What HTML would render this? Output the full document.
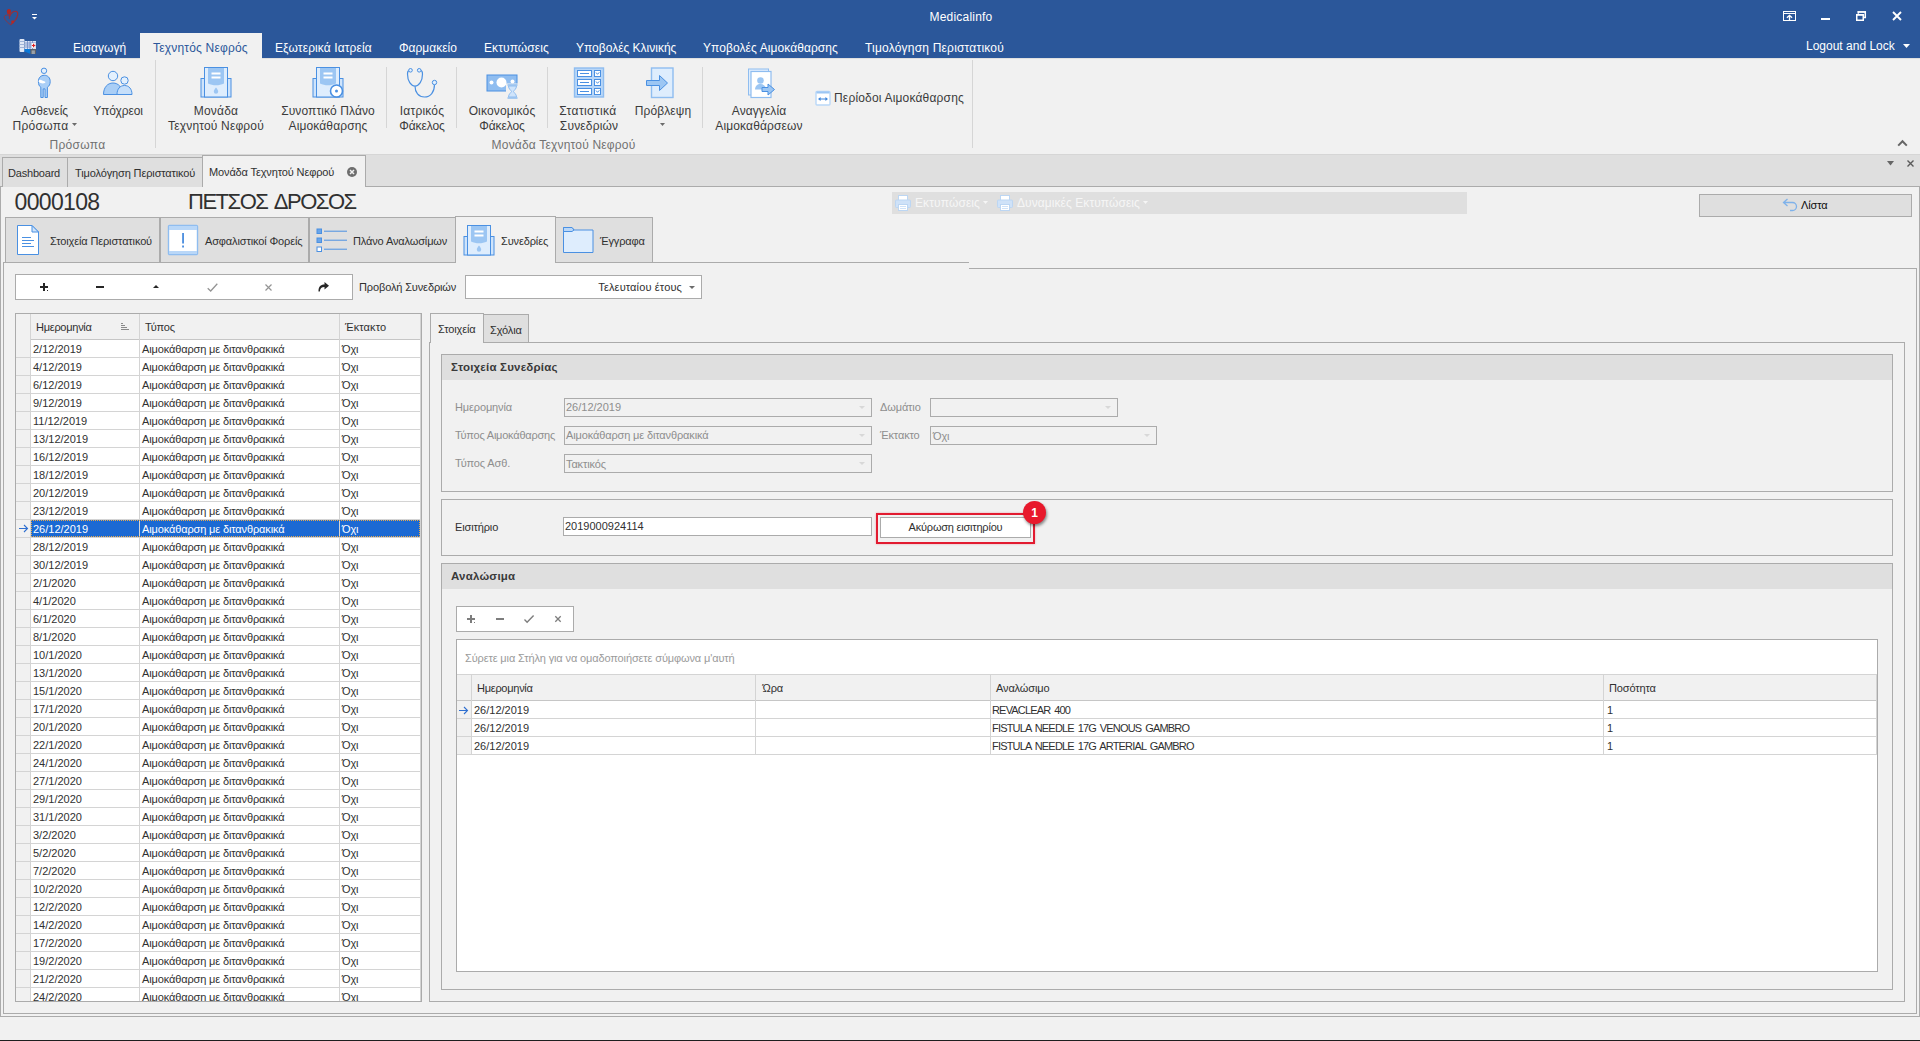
<!DOCTYPE html>
<html lang="el">
<head>
<meta charset="utf-8">
<title>Medicalinfo</title>
<style>
*{box-sizing:border-box;margin:0;padding:0}
html,body{width:1920px;height:1041px;overflow:hidden;background:#f1f1f1}
body{position:relative;font-family:"Liberation Sans",sans-serif;font-size:11px;color:#303030;line-height:1}
.a{position:absolute}
.t{position:absolute;white-space:nowrap;line-height:14px;height:14px;letter-spacing:-.130px}
.n{letter-spacing:0}
.c{text-align:center}
.r13{font-size:12px;line-height:16px;height:16px;letter-spacing:0}
.w{color:#fff}
.bx{position:absolute;border:1px solid #ababab}
.g{background:#dfdfdf}
.wh{background:#fff}
.dis{color:#8e8e8e}
.sep{position:absolute;width:1px;background:#d6d6d6}
svg{position:absolute;overflow:visible}
.rt{position:absolute;white-space:nowrap;font-size:12px;line-height:15px;text-align:center;color:#3b3b3b}
</style>
</head>
<body>
<!-- title bar + ribbon tab header -->
<div class="a" style="left:0;top:0;width:1920px;height:58px;background:#2b579a"></div>
<!-- app logo (heart) -->
<svg style="left:3px;top:8px;opacity:.9" width="16" height="18" viewBox="0 0 16 18">
<ellipse cx="5.900" cy="3.600" rx="2.100" ry="2.700" fill="#bf2318"/>
<path d="M6.300 6v5" stroke="#bf2318" stroke-width="1" stroke-opacity=".8" fill="none"/>
<path d="M6.800 8.200c1.200-3 3.400-4.900 5.600-4.900 2 0 2.600 1.600 2.200 3.800-.6 3.400-3.200 6.600-7 9.600" fill="none" stroke="#bf2318" stroke-width="1.100" stroke-opacity=".85"/>
<path d="M5.800 7.400c-1.600-.6-3.600-.4-4.300 1-.8 1.800 1.800 5.400 6 8.300" fill="none" stroke="#bf2318" stroke-width="1" stroke-opacity=".7"/>
<circle cx="9.600" cy="13.700" r="1.500" fill="#c4241a"/>
</svg>
<!-- quick access dropdown -->
<svg style="left:31px;top:13px" width="8" height="8" viewBox="0 0 8 8"><rect x="1" y="1" width="5" height="1" fill="#fff"/><path d="M1 4h5L3.5 6.5z" fill="#fff"/></svg>
<div class="t r13 w c" style="left:861px;width:200px;top:9px;letter-spacing:0.21px">Medicalinfo</div>
<!-- window buttons -->
<svg style="left:1783px;top:11px" width="13" height="10" viewBox="0 0 13 10"><rect x=".500" y=".500" width="12" height="9" fill="none" stroke="#fff"/><path d="M1 2.500h11" stroke="#fff"/><path d="M6.500 9V4.600M3.900 6.800L6.500 4.300l2.600 2.500" fill="none" stroke="#fff" stroke-width="1.300"/></svg>
<div class="a" style="left:1821px;top:18px;width:9px;height:2px;background:#fff"></div>
<svg style="left:1856px;top:11px" width="10" height="10" viewBox="0 0 10 10"><path d="M2.300 2.800V1h7v5.600H7.600" fill="none" stroke="#fff" stroke-width="1.500"/><rect x=".750" y="3.750" width="6.500" height="5.500" fill="none" stroke="#fff" stroke-width="1.500"/><rect x="0" y="3" width="8" height="1.600" fill="#fff"/><rect x="1.500" y=".200" width="8.500" height="1.300" fill="#fff"/></svg>
<svg style="left:1892px;top:11px" width="10" height="10" viewBox="0 0 10 10"><path d="M1 1l8 8M9 1L1 9" stroke="#fff" stroke-width="1.9"/></svg>

<!-- application button icon (hospital) -->
<svg style="left:19px;top:38px" width="18" height="17" viewBox="0 0 18 17">
<rect x="0.5" y="1" width="5" height="13" rx="1" fill="#dfe7f5"/><rect x="0.5" y="3" width="5" height="1" fill="#9fb3d8"/><rect x="0.5" y="6" width="5" height="1" fill="#9fb3d8"/><rect x="0.5" y="9" width="5" height="1" fill="#9fb3d8"/>
<rect x="6" y="3" width="11" height="8" fill="#d9e2f3"/><path d="M6 5h11M6 7h11M6 9h11M8.5 3v8M11 3v8M13.5 3v8" stroke="#6e8cc4" stroke-width=".8"/>
<rect x="12.6" y="5" width="4" height="5" fill="#f4f6fb"/><path d="M14.6 5.8v3.4M12.9 7.5h3.4" stroke="#e02020" stroke-width="1.2"/>
<path d="M5.5 11h6l0 5-6-2.4z" fill="#0a78d8"/><rect x="11.5" y="11" width="5.5" height="5" fill="#5b5f66"/><rect x="12.6" y="12.4" width="3.3" height="3.6" fill="#9aa0a8"/>
</svg>
<div class="t r13 w" style="left:73px;top:40px">Εισαγωγή</div>
<div class="a" style="left:140px;top:33px;width:122px;height:25px;background:#f1f1f1"></div>
<div class="t r13" style="left:153px;top:40px;color:#2b579a;letter-spacing:0.19px">Τεχνητός Νεφρός</div>
<div class="t r13 w" style="left:275px;top:40px;letter-spacing:0.095px">Εξωτερικά Ιατρεία</div>
<div class="t r13 w" style="left:399px;top:40px">Φαρμακείο</div>
<div class="t r13 w" style="left:484px;top:40px;letter-spacing:0.08px">Εκτυπώσεις</div>
<div class="t r13 w" style="left:576px;top:40px">Υποβολές Κλινικής</div>
<div class="t r13 w" style="left:703px;top:40px;letter-spacing:0.08px">Υποβολές Αιμοκάθαρσης</div>
<div class="t r13 w" style="left:865px;top:40px;letter-spacing:0.2px">Τιμολόγηση Περιστατικού</div>
<div class="t r13 w" style="left:1806px;top:38px">Logout and Lock</div>
<svg style="left:1903px;top:44px" width="7" height="4" viewBox="0 0 7 4"><path d="M0 0h7L3.5 4z" fill="#fff"/></svg>
<!-- ribbon body -->
<div class="a" style="left:0;top:58px;width:1920px;height:96px;background:#f1f1f1"></div>
<div class="a" style="left:0;top:58px;width:140px;height:1px;background:#e0e0e0"></div>
<div class="a" style="left:262px;top:58px;width:1658px;height:1px;background:#e0e0e0"></div>
<!-- separators -->
<div class="sep" style="left:155px;top:60px;height:88px"></div>
<div class="sep" style="left:386px;top:67px;height:61px"></div>
<div class="sep" style="left:456px;top:67px;height:61px"></div>
<div class="sep" style="left:547px;top:67px;height:61px"></div>
<div class="sep" style="left:702px;top:67px;height:61px"></div>
<div class="sep" style="left:972px;top:60px;height:88px"></div>

<!-- Ασθενείς Πρόσωπα icon -->
<svg style="left:28px;top:66px" width="32" height="32" viewBox="0 0 32 32">
<circle cx="16" cy="4.800" r="2.700" fill="#e3f0fd" stroke="#4a90e2" stroke-width="1"/>
<path d="M16.300 9.300c3.600 0 5.900 2.500 5.900 6.300 0 2.600-1 4.600-2.800 5.600v10.300h-2.400v-8.600h-1.800v8.600h-2.400v-10.300c-1.700-1-2.400-3-2.400-5.600 0-3.800 2.300-6.300 5.900-6.300z" fill="#a9cef6" stroke="#4a90e2" stroke-width="1"/>
<path d="M11 14.200c.9-.7 2-.4 3.200.2l2.600 1c.8.300.8 1.300 0 1.700-1.100.5-2.800.5-4.200 0-.9-.3-1.700-.8-2-1.500z" fill="#fff"/>
</svg>
<div class="rt" style="left:0;width:89px;top:104px">Ασθενείς</div>
<div class="rt" style="left:-4px;width:89px;top:119px;letter-spacing:0.3px">Πρόσωπα</div>
<svg style="left:72px;top:123px" width="5" height="3" viewBox="0 0 5 3"><path d="M0 0h5L2.500 3z" fill="#6b6b6b"/></svg>

<!-- Υπόχρεοι icon -->
<svg style="left:102px;top:66px" width="32" height="32" viewBox="0 0 32 32">
<circle cx="11" cy="10" r="4.700" fill="#e3f0fd" stroke="#4a90e2" stroke-width="1"/>
<path d="M1.500 28.500c0-7 4-11.500 9.500-11.500s9.500 4.500 9.500 11.500z" fill="#a9cef6" stroke="#4a90e2" stroke-width="1"/>
<circle cx="22.500" cy="14.500" r="3.700" fill="#e3f0fd" stroke="#4a90e2" stroke-width="1"/>
<path d="M15 28.500c0-5.500 3-9 7.500-9s7.500 3.500 7.500 9z" fill="#c6dffa" stroke="#4a90e2" stroke-width="1"/>
</svg>
<div class="rt" style="left:73px;width:90px;top:104px;letter-spacing:-0.1px">Υπόχρεοι</div>

<!-- Μονάδα Τεχνητού Νεφρού icon -->
<svg style="left:200px;top:66px" width="32" height="32" viewBox="0 0 32 32">
<rect x="1" y="12.500" width="30" height="18.500" fill="#cfe4fb" stroke="#4a90e2" stroke-width="1"/>
<rect x="4.500" y="1.500" width="23" height="29.500" fill="#deedfd" stroke="#4a90e2" stroke-width="1"/>
<path d="M8 2h16v15.500c-5 2.400-11 2.400-16 0z" fill="#9cc6f3"/>
<rect x="11.500" y="6.500" width="9" height="2" fill="#fff"/><rect x="11.500" y="10.500" width="9" height="2" fill="#fff"/>
<path d="M16 21.500c1.600 2 2.200 3 2.200 4a2.200 2.200 0 0 1-4.400 0c0-1 .6-2 2.200-4z" fill="#9cc6f3"/>
<path d="M4.500 12.500v18.500M27.500 12.500v18.500" stroke="#4a90e2" stroke-width="1"/>
</svg>
<div class="rt" style="left:156px;width:120px;top:104px;letter-spacing:0.21px">Μονάδα</div>
<div class="rt" style="left:156px;width:120px;top:119px;letter-spacing:0.17px">Τεχνητού Νεφρού</div>

<!-- Συνοπτικό Πλάνο icon -->
<svg style="left:312px;top:66px" width="32" height="32" viewBox="0 0 32 32">
<rect x="1" y="12.500" width="30" height="18.500" fill="#cfe4fb" stroke="#4a90e2" stroke-width="1"/>
<rect x="4.500" y="1.500" width="23" height="29.500" fill="#deedfd" stroke="#4a90e2" stroke-width="1"/>
<path d="M8 2h16v15.500c-5 2.400-11 2.400-16 0z" fill="#9cc6f3"/>
<rect x="11.500" y="6.500" width="9" height="2" fill="#fff"/><rect x="11.500" y="10.500" width="9" height="2" fill="#fff"/>
<path d="M4.500 12.500v18.500M27.500 12.500v18.500" stroke="#4a90e2" stroke-width="1"/>
<circle cx="24.500" cy="25" r="6" fill="#fff" stroke="#4a90e2" stroke-width="1.600"/>
<circle cx="24.500" cy="25" r="1.500" fill="#4a90e2"/>
</svg>
<div class="rt" style="left:268px;width:120px;top:104px;letter-spacing:0.1px">Συνοπτικό Πλάνο</div>
<div class="rt" style="left:268px;width:120px;top:119px;letter-spacing:0.12px">Αιμοκάθαρσης</div>

<!-- Ιατρικός Φάκελος icon (stethoscope) -->
<svg style="left:406px;top:66px" width="32" height="32" viewBox="0 0 32 32">
<path d="M3.500 4.500C2 4.500 1.500 5.500 1.500 8c0 7 3.500 12 7.500 12s7.500-5 7.500-12c0-2.500-.5-3.500-2-3.500" fill="none" stroke="#4a90e2" stroke-width="1.200"/>
<path d="M9 20c0 6.500 3.500 11 9.500 11s10-5 10-12.500" fill="none" stroke="#4a90e2" stroke-width="1.200"/>
<circle cx="4.500" cy="4.300" r="1.800" fill="#e3f0fd" stroke="#4a90e2" stroke-width="1"/>
<circle cx="13.200" cy="4.300" r="1.800" fill="#e3f0fd" stroke="#4a90e2" stroke-width="1"/>
<circle cx="28.500" cy="16.500" r="2.200" fill="#e3f0fd" stroke="#4a90e2" stroke-width="1"/>
</svg>
<div class="rt" style="left:382px;width:80px;top:104px;letter-spacing:0.21px">Ιατρικός</div>
<div class="rt" style="left:382px;width:80px;top:119px;letter-spacing:-0.12px">Φάκελος</div>

<!-- Οικονομικός Φάκελος icon -->
<svg style="left:486px;top:66px" width="32" height="32" viewBox="0 0 32 32">
<rect x="1" y="9" width="30" height="16" fill="#8fbdf0" stroke="#4a90e2" stroke-width="1"/>
<circle cx="15.500" cy="16.500" r="5" fill="#fff"/><circle cx="5.500" cy="16.500" r="2" fill="#fff"/><circle cx="26.500" cy="15.500" r="2" fill="#fff"/>
<rect x="20" y="17.500" width="12" height="14.500" fill="#f1f1f1"/>
<path d="M21.500 19h10M21.500 32h10" stroke="#8fbdf0" stroke-width="1.600"/>
<path d="M22.500 20h8c0 3-2.400 4-3 5.500.6 1.500 3 2.500 3 5.500h-8c0-3 2.400-4 3-5.500-.6-1.500-3-2.500-3-5.500z" fill="#cfe4fb" stroke="#8fbdf0" stroke-width="1"/>
</svg>
<div class="rt" style="left:457px;width:90px;top:104px;letter-spacing:0.146px">Οικονομικός</div>
<div class="rt" style="left:457px;width:90px;top:119px;letter-spacing:-0.12px">Φάκελος</div>

<!-- Στατιστικά Συνεδριών icon -->
<svg style="left:573px;top:66px" width="32" height="32" viewBox="0 0 32 32">
<rect x="1.500" y="2" width="29" height="29" fill="#b9d7f8" stroke="#8fbdf0" stroke-width="1.400"/>
<g fill="#fff" stroke="#4a90e2" stroke-width="1">
<rect x="4.500" y="4.500" width="14" height="6"/><rect x="4.500" y="13.500" width="14" height="6"/><rect x="4.500" y="22.500" width="14" height="6"/>
<rect x="21.500" y="4.500" width="6" height="6"/><rect x="21.500" y="13.500" width="6" height="6"/><rect x="21.500" y="22.500" width="6" height="6"/>
</g>
<path d="M7 7.500h9M7 16.500h9M7 25.500h9" stroke="#4a90e2" stroke-width="1"/>
<path d="M23 6.500l1.500 1.800 1.800-2M23 15.500l1.500 1.800 1.800-2M23 24.500l1.500 1.800 1.800-2" fill="none" stroke="#4a90e2" stroke-width="1"/>
</svg>
<div class="rt" style="left:548px;width:80px;top:104px;letter-spacing:0.39px">Στατιστικά</div>
<div class="rt" style="left:549px;width:80px;top:119px;letter-spacing:0.16px">Συνεδριών</div>

<!-- Πρόβλεψη icon -->
<svg style="left:645px;top:66px" width="32" height="32" viewBox="0 0 32 32">
<rect x="6.500" y="2" width="21.500" height="29.500" fill="#deedfd" stroke="#8fbdf0" stroke-width="1.400"/>
<path d="M1.500 14.500h13v-5l8 7.500-8 7.500v-5h-13z" fill="#9cc6f3" stroke="#4a90e2" stroke-width="1"/>
</svg>
<div class="rt" style="left:623px;width:80px;top:104px;letter-spacing:0.1px">Πρόβλεψη</div>
<svg style="left:660px;top:123px" width="5" height="3" viewBox="0 0 5 3"><path d="M0 0h5L2.500 3z" fill="#6b6b6b"/></svg>

<!-- Αναγγελία Αιμοκαθάρσεων icon -->
<svg style="left:745px;top:66px" width="32" height="32" viewBox="0 0 32 32">
<rect x="3.500" y="3" width="20" height="26" fill="#deedfd" stroke="#8fbdf0" stroke-width="1"/>
<rect x="6" y="5.500" width="20" height="26" fill="#fff" stroke="#8fbdf0" stroke-width="1.200"/>
<circle cx="15.500" cy="14.500" r="3.300" fill="#9cc6f3"/>
<path d="M10 23.500c0-3.500 2.400-5.500 5.500-5.500s5.500 2 5.500 5.500z" fill="#9cc6f3"/>
<path d="M17 21.500h6v-3.500l6.500 5.500-6.500 5.500v-3.500h-6z" fill="#9cc6f3" stroke="#4a90e2" stroke-width="1"/>
</svg>
<div class="rt" style="left:709px;width:100px;top:104px;letter-spacing:0.07px">Αναγγελία</div>
<div class="rt" style="left:709px;width:100px;top:119px;letter-spacing:0.144px">Αιμοκαθάρσεων</div>

<!-- Περίοδοι Αιμοκάθαρσης small item -->
<svg style="left:815px;top:90px" width="16" height="16" viewBox="0 0 16 16">
<rect x="1" y="1.500" width="14" height="13.500" rx="1" fill="#fff" stroke="#b9d7f8" stroke-width="1.400"/>
<rect x="1.500" y="1.500" width="13" height="2" fill="#9cc6f3"/>
<path d="M4 9h8" stroke="#3f86dc" stroke-width="1"/><path d="M5.600 7L3 9l2.600 2zM10.400 7L13 9l-2.600 2z" fill="#3f86dc"/>
</svg>
<div class="rt" style="left:834px;top:91px;text-align:left;letter-spacing:0.18px">Περίοδοι Αιμοκάθαρσης</div>

<!-- group captions -->
<div class="rt" style="left:0;width:155px;top:138px;color:#727272;letter-spacing:0.3px">Πρόσωπα</div>
<div class="rt" style="left:156px;width:815px;top:138px;color:#727272;letter-spacing:0.187px">Μονάδα Τεχνητού Νεφρού</div>
<!-- collapse chevron -->
<svg style="left:1897px;top:139px" width="11" height="8" viewBox="0 0 11 8"><path d="M1.200 6.600L5.500 2.200l4.300 4.400" fill="none" stroke="#666" stroke-width="2"/></svg>
<!-- document tab strip -->
<div class="a g" style="left:0;top:154px;width:1920px;height:32px;border-top:1px solid #d6d6d6"></div>
<div class="a" style="left:0;top:186px;width:1920px;height:1px;background:#ababab"></div>
<div class="bx g" style="left:2px;top:157px;width:66px;height:30px;border-bottom:0"></div>
<div class="t" style="left:8px;top:166px;letter-spacing:-.200px">Dashboard</div>
<div class="bx g" style="left:67px;top:157px;width:136px;height:30px;border-bottom:0"></div>
<div class="t" style="left:75px;top:166px">Τιμολόγηση Περιστατικού</div>
<div class="bx" style="left:202px;top:155px;width:164px;height:32px;border-bottom:0;background:#f1f1f1"></div>
<div class="t" style="left:209px;top:165px">Μονάδα Τεχνητού Νεφρού</div>
<svg style="left:347px;top:167px" width="10" height="10" viewBox="0 0 10 10"><circle cx="5" cy="5" r="5" fill="#6e6e6e"/><path d="M3 3l4 4M7 3L3 7" stroke="#f1f1f1" stroke-width="1.500"/></svg>
<svg style="left:1887px;top:161px" width="7" height="5" viewBox="0 0 7 5"><path d="M0 0h7L3.500 4.600z" fill="#666"/></svg>
<svg style="left:1907px;top:160px" width="7" height="7" viewBox="0 0 7 7"><path d="M.500.500l6 6M6.500.500l-6 6" stroke="#5a5a5a" stroke-width="1.400"/></svg>

<!-- document frame -->
<div class="a" style="left:0;top:187px;width:1px;height:830px;background:#ababab"></div>
<div class="a" style="left:1919px;top:187px;width:1px;height:830px;background:#ababab"></div>
<div class="a" style="left:0;top:1016px;width:1920px;height:1px;background:#ababab"></div>
<div class="a" style="left:0;top:1040px;width:1920px;height:1px;background:#1e1e1e"></div>

<!-- patient header -->
<div class="t n" style="left:14.500px;top:188.500px;font-size:23px;line-height:26px;height:26px;letter-spacing:-.650px">0000108</div>
<div class="t" style="left:188px;top:189px;font-size:22px;line-height:26px;height:26px;letter-spacing:-1.470px;word-spacing:2.800px">ΠΕΤΣΟΣ ΔΡΟΣΟΣ</div>

<!-- print bar (disabled) -->
<div class="a g" style="left:892px;top:192px;width:575px;height:22px"></div>
<svg style="left:895px;top:195px" width="16" height="16" viewBox="0 0 16 16"><rect x="3.500" y=".500" width="9" height="5" fill="#fff" stroke="#bcd6f3"/><rect x=".500" y="5" width="15" height="7.500" rx="1" fill="#cfe2f8" stroke="#bcd6f3"/><rect x="3.500" y="9.500" width="9" height="6" fill="#fff" stroke="#bcd6f3"/><path d="M5 11.500h6M5 13.500h6" stroke="#cfe2f8"/></svg>
<div class="t" style="left:915px;top:196px;font-size:12px;letter-spacing:.100px;color:#f6f6f6">Εκτυπώσεις</div>
<svg style="left:983px;top:201px" width="5" height="3" viewBox="0 0 5 3"><path d="M0 0h5L2.500 3z" fill="#f6f6f6"/></svg>
<svg style="left:997px;top:195px" width="16" height="16" viewBox="0 0 16 16"><rect x="3.500" y=".500" width="9" height="5" fill="#fff" stroke="#bcd6f3"/><rect x=".500" y="5" width="15" height="7.500" rx="1" fill="#cfe2f8" stroke="#bcd6f3"/><rect x="3.500" y="9.500" width="9" height="6" fill="#fff" stroke="#bcd6f3"/><path d="M5 11.500h6M5 13.500h6" stroke="#cfe2f8"/></svg>
<div class="t" style="left:1017px;top:196px;font-size:12px;letter-spacing:.070px;color:#f6f6f6">Δυναμικές Εκτυπώσεις</div>
<svg style="left:1143px;top:201px" width="5" height="3" viewBox="0 0 5 3"><path d="M0 0h5L2.500 3z" fill="#f6f6f6"/></svg>

<!-- Λίστα button -->
<div class="bx g" style="left:1699px;top:194px;width:213px;height:23px"></div>
<svg style="left:1782px;top:198px" width="16" height="14" viewBox="0 0 16 14"><path d="M5.500 1L1.500 4.500l4 3.500M1.500 4.500h9a4 4 0 0 1 0 8H8" fill="none" stroke="#7fb2ea" stroke-width="1.300"/></svg>
<div class="t" style="left:1801px;top:198px;color:#0e0e0e">Λίστα</div>
<!-- step tabs -->
<div class="a" style="left:3px;top:262px;width:966px;height:1px;background:#ababab"></div>
<div class="a" style="left:969px;top:268px;width:948px;height:1px;background:#ababab"></div>
<div class="a" style="left:3px;top:262px;width:1px;height:752px;background:#ababab"></div>
<div class="a" style="left:1916px;top:268px;width:1px;height:746px;background:#ababab"></div>
<div class="a" style="left:3px;top:1013px;width:1914px;height:1px;background:#ababab"></div>

<div class="bx g" style="left:5px;top:217px;width:155px;height:46px"></div>
<div class="bx g" style="left:160px;top:217px;width:149px;height:46px"></div>
<div class="bx g" style="left:309px;top:217px;width:147px;height:46px"></div>
<div class="bx g" style="left:555px;top:217px;width:98px;height:46px"></div>
<div class="bx" style="left:455px;top:216px;width:101px;height:47px;border-bottom:0;background:#f1f1f1"></div>

<!-- icon: document -->
<svg style="left:12px;top:224px" width="32" height="32" viewBox="0 0 32 32">
<path d="M5.500 1.500h14.500l6.500 6.500v22.500h-21z" fill="#fff" stroke="#4a90e2" stroke-width="1"/>
<path d="M20 1.500v6.500h6.500z" fill="#cfe4fb" stroke="#4a90e2" stroke-width="1"/>
<path d="M10 13.500h9M10 16.500h12M10 19.500h9M10 22.500h12" stroke="#4a90e2" stroke-width="1.200"/>
</svg>
<div class="t" style="left:50px;top:234px">Στοιχεία Περιστατικού</div>
<!-- icon: window ! -->
<svg style="left:167px;top:224px" width="32" height="32" viewBox="0 0 32 32">
<rect x="1.500" y="1.500" width="29" height="29" rx="1" fill="#fff" stroke="#8fbdf0" stroke-width="1.400"/>
<rect x="2" y="2" width="28" height="4" fill="#b9d7f8"/><rect x="2" y="27" width="28" height="3" fill="#b9d7f8"/>
<rect x="15.200" y="9" width="1.700" height="10.500" fill="#3f86dc"/><rect x="15.200" y="21.500" width="1.700" height="2" fill="#3f86dc"/>
</svg>
<div class="t" style="left:205px;top:234px">Ασφαλιστικοί Φορείς</div>
<!-- icon: list -->
<svg style="left:316px;top:224px" width="32" height="32" viewBox="0 0 32 32">
<rect x="1" y="5" width="4.500" height="4.500" fill="#6aa6ea" stroke="#4a90e2" stroke-width="1"/>
<rect x="1" y="14" width="4.500" height="4.500" fill="#6aa6ea" stroke="#4a90e2" stroke-width="1"/>
<rect x="1" y="23" width="4.500" height="4.500" fill="#fff" stroke="#4a90e2" stroke-width="1"/>
<path d="M8 7.200h23M8 16.200h23M8 25.200h23" stroke="#4a90e2" stroke-width="1"/>
</svg>
<div class="t" style="left:353px;top:234px">Πλάνο Αναλωσίμων</div>
<!-- icon: machine -->
<svg style="left:463px;top:224px" width="32" height="32" viewBox="0 0 32 32">
<rect x="1" y="12.500" width="30" height="18.500" fill="#cfe4fb" stroke="#4a90e2" stroke-width="1"/>
<rect x="4.500" y="1.500" width="23" height="29.500" fill="#deedfd" stroke="#4a90e2" stroke-width="1"/>
<path d="M8 2h16v15.500c-5 2.400-11 2.400-16 0z" fill="#9cc6f3"/>
<rect x="11.500" y="6.500" width="9" height="2" fill="#fff"/><rect x="11.500" y="10.500" width="9" height="2" fill="#fff"/>
<path d="M16 21.500c1.600 2 2.200 3 2.200 4a2.200 2.200 0 0 1-4.400 0c0-1 .6-2 2.200-4z" fill="#9cc6f3"/>
<path d="M4.500 12.500v18.500M27.500 12.500v18.500" stroke="#4a90e2" stroke-width="1"/>
</svg>
<div class="t" style="left:501px;top:234px">Συνεδρίες</div>
<!-- icon: folder -->
<svg style="left:562px;top:224px" width="32" height="32" viewBox="0 0 32 32">
<path d="M1.500 28.500v-25h8.500l2 2.500h19v22.500z" fill="#deedfd" stroke="#4a90e2" stroke-width="1"/>
<path d="M1.500 3.500h8.500l2 2.500-2 1.500h-8.500z" fill="#b9d7f8" stroke="#4a90e2" stroke-width="1"/>
</svg>
<div class="t" style="left:600px;top:234px">Έγγραφα</div>

<!-- navigator toolbar -->
<div class="bx wh" style="left:15px;top:274px;width:338px;height:26px"></div>
<svg style="left:40px;top:283px" width="9" height="9" viewBox="0 0 9 9"><path d="M4 0v8M0 4h8" stroke="#262626" stroke-width="2"/><rect x="7" y="7" width="1" height="1" fill="#262626"/></svg>
<div class="a" style="left:96px;top:286px;width:8px;height:2px;background:#262626"></div>
<svg style="left:153px;top:285px" width="6" height="3" viewBox="0 0 6 3"><path d="M0 3L3 0l3 3z" fill="#262626"/></svg>
<svg style="left:207px;top:283px" width="11" height="9" viewBox="0 0 11 9"><path d="M.700 5.200l3 2.800L10.300.800" fill="none" stroke="#949494" stroke-width="1.300"/></svg>
<svg style="left:265px;top:284px" width="7" height="7" viewBox="0 0 7 7"><path d="M.500.500l6 6M6.500.500l-6 6" stroke="#949494" stroke-width="1.200"/></svg>
<svg style="left:318px;top:282px" width="11" height="10" viewBox="0 0 11 10"><path d="M6.500 0L11 3.700 6.500 7.400V5C3.500 5 2.200 6.200 1.800 9.500H.500C.300 5 2.500 2.500 6.500 2.500z" fill="#262626"/></svg>
<div class="t" style="left:359px;top:280px">Προβολή Συνεδριών</div>
<div class="bx wh" style="left:465px;top:275px;width:237px;height:24px"></div>
<div class="t" style="left:500px;width:182px;text-align:right;top:280px;letter-spacing:.135px">Τελευταίου έτους</div>
<svg style="left:689px;top:286px" width="6" height="3" viewBox="0 0 6 3"><path d="M0 0h6L3 3z" fill="#6b6b6b"/></svg>
<!-- left grid -->
<div class="a" style="left:15px;top:313px;width:407px;height:689px;border:1px solid #ababab;background:#fff;overflow:hidden">
<div class="a" style="left:0;top:0;width:405px;height:26px;background:#f1f1f1;border-bottom:1px solid #c6c6c6"></div>
<div class="a" style="left:0;top:25px;width:15px;height:670px;background:#f1f1f1"></div>
<div class="a" style="left:14px;top:0;width:1px;height:690px;background:#d4d4d4"></div>
<div class="a" style="left:123px;top:0;width:1px;height:690px;background:#d4d4d4"></div>
<div class="a" style="left:323px;top:0;width:1px;height:690px;background:#d4d4d4"></div>
<div class="a" style="left:404px;top:0;width:1px;height:690px;background:#d4d4d4"></div>
<div class="t" style="left:20px;top:6px;letter-spacing:-.270px">Ημερομηνία</div>
<svg style="left:105px;top:9px" width="8" height="7" viewBox="0 0 8 7"><path d="M0 .5h2M0 2.500h4M0 4.500h6M0 6.500h8" stroke="#8a8a8a" stroke-width="1"/></svg>
<div class="t" style="left:129px;top:6px">Τύπος</div>
<div class="t" style="left:329px;top:6px;letter-spacing:.100px">Έκτακτο</div>
<div class="a" style="left:0;top:43px;width:405px;height:1px;background:#d4d4d4"></div>
<div class="t n" style="left:17px;top:28px">2/12/2019</div>
<div class="t" style="left:126px;top:28px">Αιμοκάθαρση με διτανθρακικά</div>
<div class="t" style="left:326px;top:28px">Όχι</div>
<div class="a" style="left:0;top:61px;width:405px;height:1px;background:#d4d4d4"></div>
<div class="t n" style="left:17px;top:46px">4/12/2019</div>
<div class="t" style="left:126px;top:46px">Αιμοκάθαρση με διτανθρακικά</div>
<div class="t" style="left:326px;top:46px">Όχι</div>
<div class="a" style="left:0;top:79px;width:405px;height:1px;background:#d4d4d4"></div>
<div class="t n" style="left:17px;top:64px">6/12/2019</div>
<div class="t" style="left:126px;top:64px">Αιμοκάθαρση με διτανθρακικά</div>
<div class="t" style="left:326px;top:64px">Όχι</div>
<div class="a" style="left:0;top:97px;width:405px;height:1px;background:#d4d4d4"></div>
<div class="t n" style="left:17px;top:82px">9/12/2019</div>
<div class="t" style="left:126px;top:82px">Αιμοκάθαρση με διτανθρακικά</div>
<div class="t" style="left:326px;top:82px">Όχι</div>
<div class="a" style="left:0;top:115px;width:405px;height:1px;background:#d4d4d4"></div>
<div class="t n" style="left:17px;top:100px">11/12/2019</div>
<div class="t" style="left:126px;top:100px">Αιμοκάθαρση με διτανθρακικά</div>
<div class="t" style="left:326px;top:100px">Όχι</div>
<div class="a" style="left:0;top:133px;width:405px;height:1px;background:#d4d4d4"></div>
<div class="t n" style="left:17px;top:118px">13/12/2019</div>
<div class="t" style="left:126px;top:118px">Αιμοκάθαρση με διτανθρακικά</div>
<div class="t" style="left:326px;top:118px">Όχι</div>
<div class="a" style="left:0;top:151px;width:405px;height:1px;background:#d4d4d4"></div>
<div class="t n" style="left:17px;top:136px">16/12/2019</div>
<div class="t" style="left:126px;top:136px">Αιμοκάθαρση με διτανθρακικά</div>
<div class="t" style="left:326px;top:136px">Όχι</div>
<div class="a" style="left:0;top:169px;width:405px;height:1px;background:#d4d4d4"></div>
<div class="t n" style="left:17px;top:154px">18/12/2019</div>
<div class="t" style="left:126px;top:154px">Αιμοκάθαρση με διτανθρακικά</div>
<div class="t" style="left:326px;top:154px">Όχι</div>
<div class="a" style="left:0;top:187px;width:405px;height:1px;background:#d4d4d4"></div>
<div class="t n" style="left:17px;top:172px">20/12/2019</div>
<div class="t" style="left:126px;top:172px">Αιμοκάθαρση με διτανθρακικά</div>
<div class="t" style="left:326px;top:172px">Όχι</div>
<div class="a" style="left:0;top:205px;width:405px;height:1px;background:#d4d4d4"></div>
<div class="t n" style="left:17px;top:190px">23/12/2019</div>
<div class="t" style="left:126px;top:190px">Αιμοκάθαρση με διτανθρακικά</div>
<div class="t" style="left:326px;top:190px">Όχι</div>
<div class="a" style="left:15px;top:206px;width:389px;height:17px;background:#1b69d3"></div>
<div class="a" style="left:123px;top:206px;width:1px;height:17px;background:#d4d4d4"></div>
<div class="a" style="left:323px;top:206px;width:1px;height:17px;background:#d4d4d4"></div>
<div class="a" style="left:15px;top:206px;width:389px;height:17px;border:1px dotted #e9a94a"></div>
<svg style="left:3px;top:210px" width="9" height="9" viewBox="0 0 9 9"><path d="M0 4.500h8M5 1l3.500 3.500L5 8" fill="none" stroke="#2f6fd0" stroke-width="1.100"/></svg>
<div class="a" style="left:0;top:223px;width:405px;height:1px;background:#d4d4d4"></div>
<div class="t w n" style="left:17px;top:208px">26/12/2019</div>
<div class="t w" style="left:126px;top:208px">Αιμοκάθαρση με διτανθρακικά</div>
<div class="t w" style="left:326px;top:208px">Όχι</div>
<div class="a" style="left:0;top:241px;width:405px;height:1px;background:#d4d4d4"></div>
<div class="t n" style="left:17px;top:226px">28/12/2019</div>
<div class="t" style="left:126px;top:226px">Αιμοκάθαρση με διτανθρακικά</div>
<div class="t" style="left:326px;top:226px">Όχι</div>
<div class="a" style="left:0;top:259px;width:405px;height:1px;background:#d4d4d4"></div>
<div class="t n" style="left:17px;top:244px">30/12/2019</div>
<div class="t" style="left:126px;top:244px">Αιμοκάθαρση με διτανθρακικά</div>
<div class="t" style="left:326px;top:244px">Όχι</div>
<div class="a" style="left:0;top:277px;width:405px;height:1px;background:#d4d4d4"></div>
<div class="t n" style="left:17px;top:262px">2/1/2020</div>
<div class="t" style="left:126px;top:262px">Αιμοκάθαρση με διτανθρακικά</div>
<div class="t" style="left:326px;top:262px">Όχι</div>
<div class="a" style="left:0;top:295px;width:405px;height:1px;background:#d4d4d4"></div>
<div class="t n" style="left:17px;top:280px">4/1/2020</div>
<div class="t" style="left:126px;top:280px">Αιμοκάθαρση με διτανθρακικά</div>
<div class="t" style="left:326px;top:280px">Όχι</div>
<div class="a" style="left:0;top:313px;width:405px;height:1px;background:#d4d4d4"></div>
<div class="t n" style="left:17px;top:298px">6/1/2020</div>
<div class="t" style="left:126px;top:298px">Αιμοκάθαρση με διτανθρακικά</div>
<div class="t" style="left:326px;top:298px">Όχι</div>
<div class="a" style="left:0;top:331px;width:405px;height:1px;background:#d4d4d4"></div>
<div class="t n" style="left:17px;top:316px">8/1/2020</div>
<div class="t" style="left:126px;top:316px">Αιμοκάθαρση με διτανθρακικά</div>
<div class="t" style="left:326px;top:316px">Όχι</div>
<div class="a" style="left:0;top:349px;width:405px;height:1px;background:#d4d4d4"></div>
<div class="t n" style="left:17px;top:334px">10/1/2020</div>
<div class="t" style="left:126px;top:334px">Αιμοκάθαρση με διτανθρακικά</div>
<div class="t" style="left:326px;top:334px">Όχι</div>
<div class="a" style="left:0;top:367px;width:405px;height:1px;background:#d4d4d4"></div>
<div class="t n" style="left:17px;top:352px">13/1/2020</div>
<div class="t" style="left:126px;top:352px">Αιμοκάθαρση με διτανθρακικά</div>
<div class="t" style="left:326px;top:352px">Όχι</div>
<div class="a" style="left:0;top:385px;width:405px;height:1px;background:#d4d4d4"></div>
<div class="t n" style="left:17px;top:370px">15/1/2020</div>
<div class="t" style="left:126px;top:370px">Αιμοκάθαρση με διτανθρακικά</div>
<div class="t" style="left:326px;top:370px">Όχι</div>
<div class="a" style="left:0;top:403px;width:405px;height:1px;background:#d4d4d4"></div>
<div class="t n" style="left:17px;top:388px">17/1/2020</div>
<div class="t" style="left:126px;top:388px">Αιμοκάθαρση με διτανθρακικά</div>
<div class="t" style="left:326px;top:388px">Όχι</div>
<div class="a" style="left:0;top:421px;width:405px;height:1px;background:#d4d4d4"></div>
<div class="t n" style="left:17px;top:406px">20/1/2020</div>
<div class="t" style="left:126px;top:406px">Αιμοκάθαρση με διτανθρακικά</div>
<div class="t" style="left:326px;top:406px">Όχι</div>
<div class="a" style="left:0;top:439px;width:405px;height:1px;background:#d4d4d4"></div>
<div class="t n" style="left:17px;top:424px">22/1/2020</div>
<div class="t" style="left:126px;top:424px">Αιμοκάθαρση με διτανθρακικά</div>
<div class="t" style="left:326px;top:424px">Όχι</div>
<div class="a" style="left:0;top:457px;width:405px;height:1px;background:#d4d4d4"></div>
<div class="t n" style="left:17px;top:442px">24/1/2020</div>
<div class="t" style="left:126px;top:442px">Αιμοκάθαρση με διτανθρακικά</div>
<div class="t" style="left:326px;top:442px">Όχι</div>
<div class="a" style="left:0;top:475px;width:405px;height:1px;background:#d4d4d4"></div>
<div class="t n" style="left:17px;top:460px">27/1/2020</div>
<div class="t" style="left:126px;top:460px">Αιμοκάθαρση με διτανθρακικά</div>
<div class="t" style="left:326px;top:460px">Όχι</div>
<div class="a" style="left:0;top:493px;width:405px;height:1px;background:#d4d4d4"></div>
<div class="t n" style="left:17px;top:478px">29/1/2020</div>
<div class="t" style="left:126px;top:478px">Αιμοκάθαρση με διτανθρακικά</div>
<div class="t" style="left:326px;top:478px">Όχι</div>
<div class="a" style="left:0;top:511px;width:405px;height:1px;background:#d4d4d4"></div>
<div class="t n" style="left:17px;top:496px">31/1/2020</div>
<div class="t" style="left:126px;top:496px">Αιμοκάθαρση με διτανθρακικά</div>
<div class="t" style="left:326px;top:496px">Όχι</div>
<div class="a" style="left:0;top:529px;width:405px;height:1px;background:#d4d4d4"></div>
<div class="t n" style="left:17px;top:514px">3/2/2020</div>
<div class="t" style="left:126px;top:514px">Αιμοκάθαρση με διτανθρακικά</div>
<div class="t" style="left:326px;top:514px">Όχι</div>
<div class="a" style="left:0;top:547px;width:405px;height:1px;background:#d4d4d4"></div>
<div class="t n" style="left:17px;top:532px">5/2/2020</div>
<div class="t" style="left:126px;top:532px">Αιμοκάθαρση με διτανθρακικά</div>
<div class="t" style="left:326px;top:532px">Όχι</div>
<div class="a" style="left:0;top:565px;width:405px;height:1px;background:#d4d4d4"></div>
<div class="t n" style="left:17px;top:550px">7/2/2020</div>
<div class="t" style="left:126px;top:550px">Αιμοκάθαρση με διτανθρακικά</div>
<div class="t" style="left:326px;top:550px">Όχι</div>
<div class="a" style="left:0;top:583px;width:405px;height:1px;background:#d4d4d4"></div>
<div class="t n" style="left:17px;top:568px">10/2/2020</div>
<div class="t" style="left:126px;top:568px">Αιμοκάθαρση με διτανθρακικά</div>
<div class="t" style="left:326px;top:568px">Όχι</div>
<div class="a" style="left:0;top:601px;width:405px;height:1px;background:#d4d4d4"></div>
<div class="t n" style="left:17px;top:586px">12/2/2020</div>
<div class="t" style="left:126px;top:586px">Αιμοκάθαρση με διτανθρακικά</div>
<div class="t" style="left:326px;top:586px">Όχι</div>
<div class="a" style="left:0;top:619px;width:405px;height:1px;background:#d4d4d4"></div>
<div class="t n" style="left:17px;top:604px">14/2/2020</div>
<div class="t" style="left:126px;top:604px">Αιμοκάθαρση με διτανθρακικά</div>
<div class="t" style="left:326px;top:604px">Όχι</div>
<div class="a" style="left:0;top:637px;width:405px;height:1px;background:#d4d4d4"></div>
<div class="t n" style="left:17px;top:622px">17/2/2020</div>
<div class="t" style="left:126px;top:622px">Αιμοκάθαρση με διτανθρακικά</div>
<div class="t" style="left:326px;top:622px">Όχι</div>
<div class="a" style="left:0;top:655px;width:405px;height:1px;background:#d4d4d4"></div>
<div class="t n" style="left:17px;top:640px">19/2/2020</div>
<div class="t" style="left:126px;top:640px">Αιμοκάθαρση με διτανθρακικά</div>
<div class="t" style="left:326px;top:640px">Όχι</div>
<div class="a" style="left:0;top:673px;width:405px;height:1px;background:#d4d4d4"></div>
<div class="t n" style="left:17px;top:658px">21/2/2020</div>
<div class="t" style="left:126px;top:658px">Αιμοκάθαρση με διτανθρακικά</div>
<div class="t" style="left:326px;top:658px">Όχι</div>
<div class="a" style="left:0;top:691px;width:405px;height:1px;background:#d4d4d4"></div>
<div class="t n" style="left:17px;top:676px">24/2/2020</div>
<div class="t" style="left:126px;top:676px">Αιμοκάθαρση με διτανθρακικά</div>
<div class="t" style="left:326px;top:676px">Όχι</div>
</div>
<!-- right detail panel: inner tab control -->
<div class="bx" style="left:429px;top:342px;width:1476px;height:660px"></div>
<div class="bx g" style="left:483px;top:314px;width:46px;height:29px"></div>
<div class="bx" style="left:430px;top:313px;width:54px;height:30px;border-bottom:0;background:#f1f1f1"></div>
<div class="t" style="left:438px;top:322px">Στοιχεία</div>
<div class="t" style="left:490px;top:323px">Σχόλια</div>

<!-- group: Στοιχεία Συνεδρίας -->
<div class="bx" style="left:441px;top:354px;width:1452px;height:138px"></div>
<div class="a g" style="left:442px;top:355px;width:1450px;height:25px"></div>
<div class="t" style="left:451px;top:360px;font-weight:bold;font-size:11.500px;letter-spacing:.200px;color:#3a3a3a">Στοιχεία Συνεδρίας</div>

<div class="t dis" style="left:455px;top:400px">Ημερομηνία</div>
<div class="bx" style="left:564px;top:398px;width:308px;height:19px"></div>
<div class="t n dis" style="left:566px;top:400px">26/12/2019</div>
<svg style="left:859px;top:406px" width="6" height="3" viewBox="0 0 6 3"><path d="M0 0h6L3 3z" fill="#d8d8d8"/></svg>

<div class="t dis" style="left:455px;top:428px;letter-spacing:-.220px">Τύπος Αιμοκάθαρσης</div>
<div class="bx" style="left:564px;top:426px;width:308px;height:19px"></div>
<div class="t dis" style="left:566px;top:428px">Αιμοκάθαρση με διτανθρακικά</div>
<svg style="left:859px;top:434px" width="6" height="3" viewBox="0 0 6 3"><path d="M0 0h6L3 3z" fill="#d8d8d8"/></svg>

<div class="t dis" style="left:455px;top:456px">Τύπος Ασθ.</div>
<div class="bx" style="left:564px;top:454px;width:308px;height:19px"></div>
<div class="t dis" style="left:566px;top:457px">Τακτικός</div>
<svg style="left:859px;top:462px" width="6" height="3" viewBox="0 0 6 3"><path d="M0 0h6L3 3z" fill="#d8d8d8"/></svg>

<div class="t dis" style="left:880px;top:400px">Δωμάτιο</div>
<div class="bx" style="left:930px;top:398px;width:188px;height:19px"></div>
<svg style="left:1105px;top:406px" width="6" height="3" viewBox="0 0 6 3"><path d="M0 0h6L3 3z" fill="#d8d8d8"/></svg>

<div class="t dis" style="left:880px;top:428px">Έκτακτο</div>
<div class="bx" style="left:930px;top:426px;width:227px;height:19px"></div>
<div class="t dis" style="left:933px;top:429px">Όχι</div>
<svg style="left:1144px;top:434px" width="6" height="3" viewBox="0 0 6 3"><path d="M0 0h6L3 3z" fill="#d8d8d8"/></svg>

<!-- group: Εισιτήριο -->
<div class="bx" style="left:441px;top:499px;width:1452px;height:57px"></div>
<div class="t" style="left:455px;top:520px">Εισιτήριο</div>
<div class="bx wh" style="left:563px;top:517px;width:309px;height:19px"></div>
<div class="t n" style="left:565px;top:519px">2019000924114</div>
<div class="a" style="left:876px;top:513px;width:159px;height:31px;border:2px solid #e21b30;box-shadow:0 0 2px rgba(226,27,48,.35)"></div>
<div class="bx wh" style="left:880px;top:517px;width:151px;height:21px"></div>
<div class="t c" style="left:880px;width:151px;top:520px;letter-spacing:-.210px">Ακύρωση εισιτηρίου</div>
<div class="a" style="left:1023px;top:501px;width:23px;height:23px;border-radius:12px;background:#e8192c;box-shadow:1px 2px 3px rgba(0,0,0,.45)"></div>
<div class="t w c" style="left:1023px;width:23px;top:505.500px;font-weight:bold;font-size:12px">1</div>

<!-- group: Αναλώσιμα -->
<div class="bx" style="left:441px;top:563px;width:1452px;height:427px"></div>
<div class="a g" style="left:442px;top:564px;width:1450px;height:25px"></div>
<div class="t" style="left:451px;top:569px;font-weight:bold;font-size:11.500px;letter-spacing:.200px;color:#3a3a3a">Αναλώσιμα</div>

<div class="bx wh" style="left:456px;top:606px;width:118px;height:26px"></div>
<svg style="left:467px;top:615px" width="9" height="9" viewBox="0 0 9 9"><path d="M4 0v8M0 4h8" stroke="#7d7d7d" stroke-width="2"/><rect x="7" y="7" width="1" height="1" fill="#7d7d7d"/></svg>
<div class="a" style="left:496px;top:618px;width:8px;height:2px;background:#7d7d7d"></div>
<svg style="left:524px;top:615px" width="10" height="8" viewBox="0 0 10 8"><path d="M.500 4.600l2.600 2.600L9.600.400" fill="none" stroke="#7d7d7d" stroke-width="1.400"/></svg>
<svg style="left:555px;top:616px" width="6" height="6" viewBox="0 0 6 6"><path d="M.300.300l5.400 5.400M5.700.300L.300 5.700" stroke="#7d7d7d" stroke-width="1.300"/></svg>

<!-- consumables grid -->
<div class="a" style="left:456px;top:639px;width:1422px;height:333px;border:1px solid #ababab;background:#fff;overflow:hidden">
<div class="t" style="left:8px;top:11px;color:#9b9b9b">Σύρετε μια Στήλη για να ομαδοποιήσετε σύμφωνα μ'αυτή</div>
<div class="a" style="left:0;top:34px;width:1420px;height:27px;background:#f1f1f1;border-top:1px solid #d4d4d4;border-bottom:1px solid #c6c6c6"></div>
<div class="a" style="left:0;top:61px;width:14px;height:54px;background:#f1f1f1"></div>
<div class="a" style="left:14px;top:35px;width:1px;height:80px;background:#d4d4d4"></div>
<div class="a" style="left:298px;top:35px;width:1px;height:80px;background:#d4d4d4"></div>
<div class="a" style="left:533px;top:35px;width:1px;height:80px;background:#d4d4d4"></div>
<div class="a" style="left:1146px;top:35px;width:1px;height:80px;background:#d4d4d4"></div>
<div class="a" style="left:1419px;top:35px;width:1px;height:80px;background:#d4d4d4"></div>
<div class="a" style="left:0;top:78px;width:1420px;height:1px;background:#d4d4d4"></div>
<div class="a" style="left:0;top:96px;width:1420px;height:1px;background:#d4d4d4"></div>
<div class="a" style="left:0;top:114px;width:1420px;height:1px;background:#d4d4d4"></div>
<div class="t" style="left:20px;top:41px;letter-spacing:-.270px">Ημερομηνία</div>
<div class="t" style="left:305.500px;top:41px">Ώρα</div>
<div class="t" style="left:539px;top:41px">Αναλώσιμο</div>
<div class="t" style="left:1152px;top:41px">Ποσότητα</div>
<svg style="left:2px;top:66px" width="9" height="9" viewBox="0 0 9 9"><path d="M0 4.500h8M5 1l3.500 3.500L5 8" fill="none" stroke="#2f6fd0" stroke-width="1.100"/></svg>
<div class="t n" style="left:17px;top:63px">26/12/2019</div>
<div class="t n" style="left:17px;top:81px">26/12/2019</div>
<div class="t n" style="left:17px;top:99px">26/12/2019</div>
<div class="t" style="left:535px;top:63px;letter-spacing:-.820px;word-spacing:1.600px">REVACLEAR 400</div>
<div class="t" style="left:535px;top:81px;letter-spacing:-.820px;word-spacing:1.600px">FISTULA NEEDLE 17G VENOUS GAMBRO</div>
<div class="t" style="left:535px;top:99px;letter-spacing:-.820px;word-spacing:1.600px">FISTULA NEEDLE 17G ARTERIAL GAMBRO</div>
<div class="t" style="left:1150px;top:63px">1</div>
<div class="t" style="left:1150px;top:81px">1</div>
<div class="t" style="left:1150px;top:99px">1</div>
</div>
</body>
</html>
